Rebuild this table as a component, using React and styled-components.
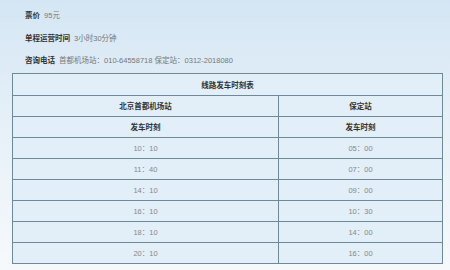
import React from 'react';
import styled, { createGlobalStyle } from 'styled-components';

const GlobalStyle = createGlobalStyle`
  html, body {
    margin: 0;
    padding: 0;
  }
  body {
    width: 450px;
    height: 270px;
    overflow: hidden;
    font-family: "Liberation Sans", "Noto Sans CJK SC", sans-serif;
  }
`;

const Page = styled.div`
  width: 450px;
  height: 270px;
  box-sizing: border-box;
  padding: 10px 7px 0 12px;
  background: linear-gradient(180deg, #d4e6f4 0%, #e6f0f8 45%, #f6f9fc 100%);
`;

const Info = styled.div`
  padding-left: 13px;
`;

const Line = styled.p`
  margin: 0;
  height: 22.5px;
  line-height: 12px;
  font-size: 7.5px;
  color: #777;
  white-space: nowrap;
`;

const Label = styled.b`
  color: #333;
  font-weight: bold;
  margin-right: 2px;
`;

const Table = styled.table`
  margin-top: -5px;
  width: 431px;
  border-collapse: collapse;
  background: #e2eef8;
  border: 1px solid #6f8a97;
  font-size: 7.5px;
`;

const Row = styled.tr`
  height: ${p => (p.$title ? '22px' : '21px')};
`;

const Cell = styled.td`
  padding: 0;
  text-align: center;
  border: 1px solid #6f8a97;
  color: ${p => (p.$head ? '#333' : '#888')};
  font-weight: ${p => (p.$head ? 'bold' : 'normal')};
  width: ${p => p.$w || 'auto'};
`;

const rows = [
  ['10：10', '05：00'],
  ['11：40', '07：00'],
  ['14：10', '09：00'],
  ['16：10', '10：30'],
  ['18：10', '14：00'],
  ['20：10', '16：00'],
];

const App = () => {
  return (
    <Page>
      <GlobalStyle />
      <Info>
        <Line>
          <Label>票价</Label> 95元
        </Line>
        <Line>
          <Label>单程运营时间</Label> 3小时30分钟
        </Line>
        <Line>
          <Label>咨询电话</Label> 首都机场站：010-64558718 保定站：0312-2018080
        </Line>
      </Info>
      <Table>
        <tbody>
          <Row $title>
            <Cell $head colSpan={2}>线路发车时刻表</Cell>
          </Row>
          <Row>
            <Cell $head $w="265px">北京首都机场站</Cell>
            <Cell $head>保定站</Cell>
          </Row>
          <Row>
            <Cell $head>发车时刻</Cell>
            <Cell $head>发车时刻</Cell>
          </Row>
          {rows.map(([a, b]) => (
            <Row key={a}>
              <Cell>{a}</Cell>
              <Cell>{b}</Cell>
            </Row>
          ))}
        </tbody>
      </Table>
    </Page>
  );
};

export default App;
